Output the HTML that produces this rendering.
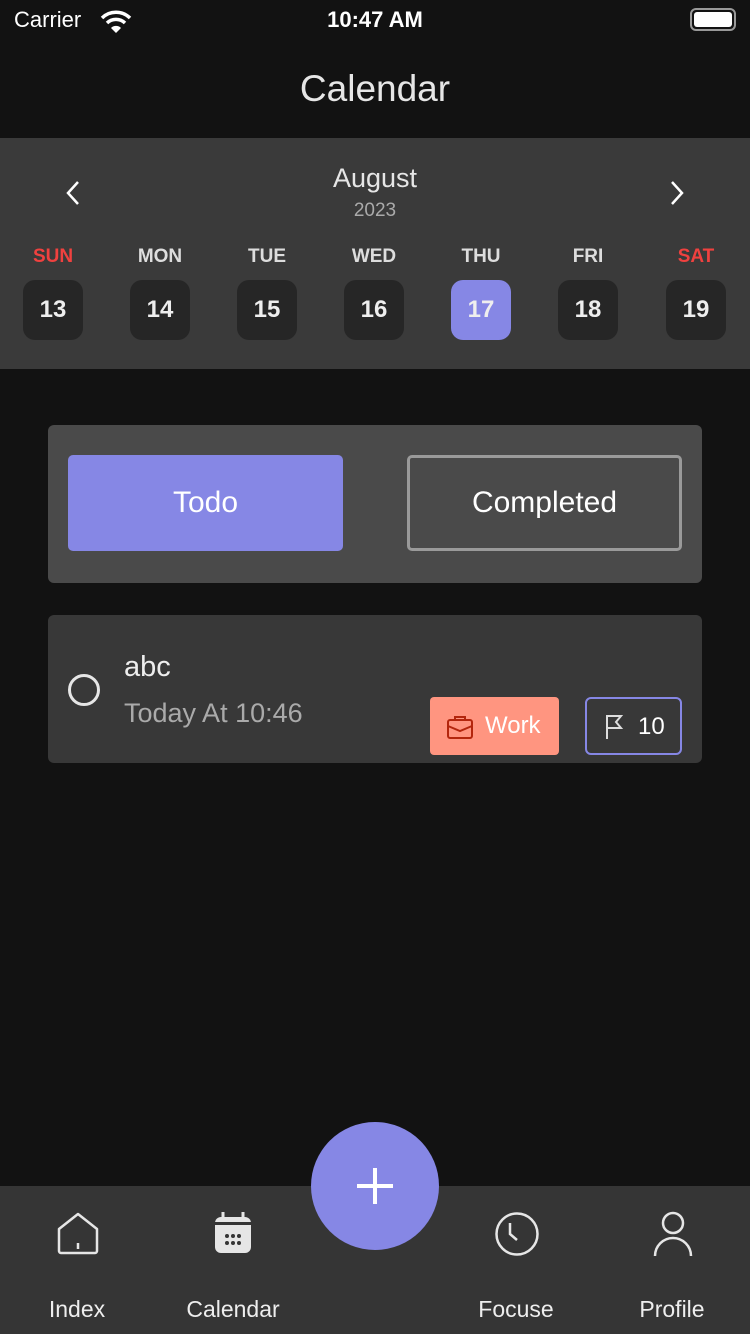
<!DOCTYPE html>
<html><head><meta charset="utf-8"><style>
*{margin:0;padding:0;box-sizing:border-box}
body{width:750px;height:1334px;background:#121212;font-family:"Liberation Sans",sans-serif;position:relative;overflow:hidden;color:#fff}
.abs{position:absolute}
.day{position:absolute;top:246px;width:60px;text-align:center}
.day .l{font-size:19px;font-weight:bold;color:#ddd;height:24px}
.day .n{margin-top:10px;width:60px;height:60px;border-radius:12px;background:#262626;font-size:24px;font-weight:bold;line-height:60px;color:#eee}
.tab{position:absolute;top:1296px;font-size:23px;color:#eee;text-align:center;width:140px}
</style></head><body>
<div class="abs" style="left:14px;top:7px;font-size:22px">Carrier</div>
<svg class="abs" style="left:100px;top:9px" width="32" height="24" viewBox="0 0 32 24"><path d="M2 9a20 20 0 0 1 28 0" stroke="#fff" stroke-width="3.5" fill="none"/><path d="M7 14a13 13 0 0 1 18 0" stroke="#fff" stroke-width="3.5" fill="none"/><path d="M11 19l5 5 5-5a7 7 0 0 0-10 0z" fill="#fff"/></svg>
<div class="abs" style="left:0;width:750px;text-align:center;top:7px;font-size:22px;font-weight:bold">10:47 AM</div>
<div class="abs" style="left:690px;top:8px;width:46px;height:23px;border:2px solid #999;border-radius:6px;padding:2px"><div style="background:#fff;width:100%;height:100%;border-radius:3px"></div></div>
<div class="abs" style="left:0;width:750px;text-align:center;top:68px;font-size:37px;color:#e6e6e6">Calendar</div>

<div class="abs" style="left:0;top:138px;width:750px;height:231px;background:#3a3a3a"></div>
<svg class="abs" style="left:64px;top:180px" width="20" height="26"><path d="M14 2L4 13l10 11" stroke="#fff" stroke-width="2.5" fill="none"/></svg>
<svg class="abs" style="left:666px;top:180px" width="20" height="26"><path d="M6 2l10 11L6 24" stroke="#fff" stroke-width="2.5" fill="none"/></svg>
<div class="abs" style="left:0;width:750px;text-align:center;top:163px;font-size:27px;color:#e6e6e6">August</div>
<div class="abs" style="left:0;width:750px;text-align:center;top:200px;font-size:19px;color:#aaa">2023</div>
<div class="day" style="left:23px"><div class="l" style="color:#f0413f">SUN</div><div class="n">13</div></div>
<div class="day" style="left:130px"><div class="l">MON</div><div class="n">14</div></div>
<div class="day" style="left:237px"><div class="l">TUE</div><div class="n">15</div></div>
<div class="day" style="left:344px"><div class="l">WED</div><div class="n">16</div></div>
<div class="day" style="left:451px"><div class="l">THU</div><div class="n" style="background:#8687e5">17</div></div>
<div class="day" style="left:558px"><div class="l">FRI</div><div class="n">18</div></div>
<div class="day" style="left:666px"><div class="l" style="color:#f0413f">SAT</div><div class="n">19</div></div>

<div class="abs" style="left:48px;top:425px;width:654px;height:158px;background:#4a4a4a;border-radius:6px"></div>
<div class="abs" style="left:68px;top:455px;width:275px;height:96px;background:#8687e5;border-radius:5px;text-align:center;line-height:96px;font-size:30px">Todo</div>
<div class="abs" style="left:407px;top:455px;width:275px;height:96px;border:3px solid #9a9a9a;border-radius:5px;text-align:center;line-height:90px;font-size:30px">Completed</div>

<div class="abs" style="left:48px;top:615px;width:654px;height:148px;background:#383838;border-radius:6px"></div>
<div class="abs" style="left:68px;top:674px;width:32px;height:32px;border:3px solid #e6e6e6;border-radius:50%"></div>
<div class="abs" style="left:124px;top:651px;font-size:29px;color:#eee">abc</div>
<div class="abs" style="left:124px;top:698px;font-size:27px;color:#aaa">Today At 10:46</div>
<div class="abs" style="left:430px;top:697px;width:129px;height:58px;background:#ff9580;border-radius:4px"></div>
<svg class="abs" style="left:446px;top:714px" width="28" height="26" viewBox="0 0 28 26"><rect x="2" y="6" width="24" height="18" rx="2" stroke="#b3260d" stroke-width="2" fill="none"/><path d="M9 6V3h10v3M2 12l12 5 12-5" stroke="#b3260d" stroke-width="2" fill="none"/></svg>
<div class="abs" style="left:485px;top:712px;font-size:24px">Work</div>
<div class="abs" style="left:585px;top:697px;width:97px;height:58px;border:2px solid #8687e5;border-radius:6px"></div>
<svg class="abs" style="left:604px;top:713px" width="22" height="28"><path d="M3 26V3h14l-5 6 5 6H3" stroke="#ddd" stroke-width="2" fill="none"/></svg>
<div class="abs" style="left:638px;top:713px;font-size:24px">10</div>

<div class="abs" style="left:0;top:1186px;width:750px;height:148px;background:#353535"></div>
<div class="abs" style="left:311px;top:1122px;width:128px;height:128px;border-radius:50%;background:#8687e5"></div>
<svg class="abs" style="left:355px;top:1166px" width="40" height="40"><path d="M20 2v36M2 20h36" stroke="#fff" stroke-width="4"/></svg>
<svg class="abs" style="left:55px;top:1211px" width="46" height="46"><path d="M4 18L23 3l19 15v22a2 2 0 0 1-2 2H6a2 2 0 0 1-2-2z" stroke="#e6e6e6" stroke-width="2.5" fill="none" stroke-linejoin="round"/><path d="M23 32v6" stroke="#e6e6e6" stroke-width="2.5"/></svg>
<svg class="abs" style="left:212px;top:1211px" width="42" height="44"><rect x="3" y="6" width="36" height="36" rx="6" fill="#e6e6e6"/><path d="M11 1v8M31 1v8" stroke="#e6e6e6" stroke-width="3"/><rect x="3" y="11" width="36" height="3" fill="#353535"/><g fill="#353535"><circle cx="15" cy="25" r="2"/><circle cx="21" cy="25" r="2"/><circle cx="27" cy="25" r="2"/><circle cx="15" cy="32" r="2"/><circle cx="21" cy="32" r="2"/><circle cx="27" cy="32" r="2"/></g></svg>
<svg class="abs" style="left:494px;top:1211px" width="46" height="46"><circle cx="23" cy="23" r="20.5" stroke="#e6e6e6" stroke-width="2.5" fill="none"/><path d="M16 12v11l7 6" stroke="#e6e6e6" stroke-width="2.5" fill="none"/></svg>
<svg class="abs" style="left:650px;top:1211px" width="46" height="46"><circle cx="23" cy="12" r="10" stroke="#e6e6e6" stroke-width="2.5" fill="none"/><path d="M5 45a18 18 0 0 1 36 0" stroke="#e6e6e6" stroke-width="2.5" fill="none"/></svg>
<div class="tab" style="left:7px">Index</div>
<div class="tab" style="left:163px">Calendar</div>
<div class="tab" style="left:446px">Focuse</div>
<div class="tab" style="left:602px">Profile</div>
</body></html>
